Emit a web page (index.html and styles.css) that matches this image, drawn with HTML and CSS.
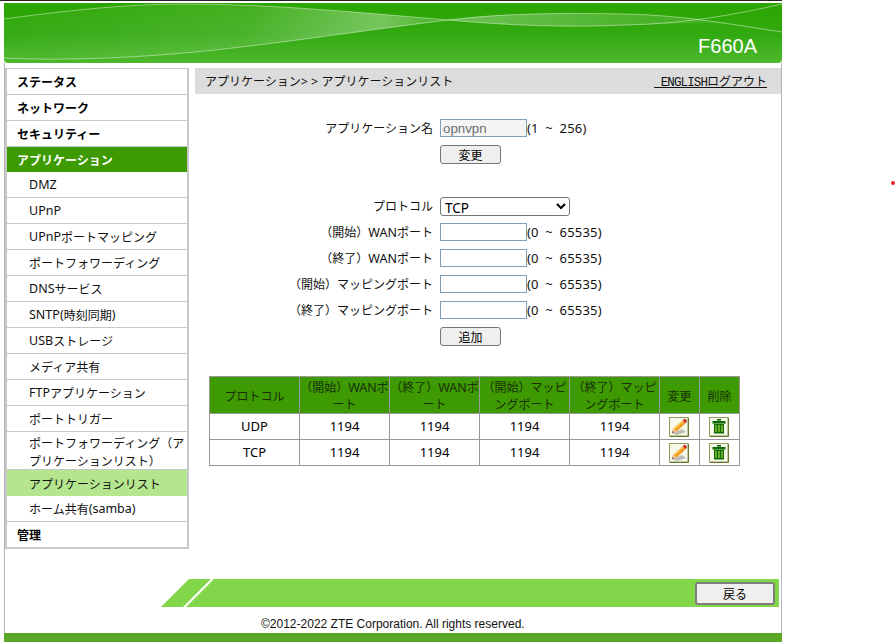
FILE: index.html
```html
<!DOCTYPE html>
<html lang="ja">
<head>
<meta charset="utf-8">
<title>F660A</title>
<link rel="stylesheet" href="styles.css">
</head>
<body>
<div class="topline"></div>
<div class="page">
  <header class="banner">
    <svg class="swoosh" viewBox="0 0 778 60" preserveAspectRatio="none">
      <defs>
        <linearGradient id="bg" x1="0" y1="0" x2="0" y2="1">
          <stop offset="0" stop-color="#2aa500"/>
          <stop offset="0.55" stop-color="#33aa12"/>
          <stop offset="1" stop-color="#4fb82e"/>
        </linearGradient>
        <linearGradient id="lens1" x1="0" y1="0" x2="1" y2="0">
          <stop offset="0" stop-color="#fff" stop-opacity="0.02"/>
          <stop offset="0.55" stop-color="#fff" stop-opacity="0.12"/>
          <stop offset="0.85" stop-color="#fff" stop-opacity="0.34"/>
          <stop offset="1" stop-color="#fff" stop-opacity="0.1"/>
        </linearGradient>
        <linearGradient id="lens2" x1="0" y1="0" x2="1" y2="0">
          <stop offset="0" stop-color="#fff" stop-opacity="0.3"/>
          <stop offset="0.5" stop-color="#fff" stop-opacity="0.16"/>
          <stop offset="1" stop-color="#fff" stop-opacity="0.02"/>
        </linearGradient>
      </defs>
      <rect width="778" height="60" fill="url(#bg)"/>
      <path d="M0 16C60 8 120 1 180 1C270 1 360 10 444 17C370 26 300 37 220 46C140 55 60 58 0 55Z" fill="url(#lens1)"/>
      <path d="M444 17C500 10 560 10 620 11C680 12 730 22 778 29C730 16 680 21 620 22C560 25 500 22 444 17Z" fill="url(#lens2)"/>
      <path d="M0 16C60 8 120 1 180 1C270 1 360 10 444 17" class="thin"/>
      <path d="M0 55C60 58 140 55 220 46C300 37 370 26 444 17C500 10 560 10 620 11C680 12 730 22 778 29" class="thin"/>
      <path d="M444 17C500 22 560 25 620 22C680 21 730 12 778 1" class="thin"/>
    </svg>
    <span class="model">F660A</span>
  </header>

  <div class="main">
    <nav class="menu">
      <a class="top">ステータス</a>
      <a class="top">ネットワーク</a>
      <a class="top">セキュリティー</a>
      <a class="top active">アプリケーション</a>
      <a class="sub"><span class="l">DMZ</span></a>
      <a class="sub"><span class="l">UPnP</span></a>
      <a class="sub"><span class="l">UPnP</span>ポートマッピング</a>
      <a class="sub">ポートフォワーディング</a>
      <a class="sub"><span class="l">DNS</span>サービス</a>
      <a class="sub"><span class="l">SNTP(</span>時刻同期<span class="l">)</span></a>
      <a class="sub"><span class="l">USB</span>ストレージ</a>
      <a class="sub">メディア共有</a>
      <a class="sub"><span class="l">FTP</span>アプリケーション</a>
      <a class="sub">ポートトリガー</a>
      <a class="sub two">ポートフォワーディング（アプリケーションリスト）</a>
      <a class="sub current">アプリケーションリスト</a>
      <a class="sub">ホーム共有<span class="l">(samba)</span></a>
      <a class="top">管理</a>
    </nav>

    <main class="content">
      <div class="crumb">
        <span>アプリケーション<span class="gt">&gt;&gt;</span>アプリケーションリスト</span>
        <span class="links"><span class="mono">&nbsp;ENGLISH</span>ログアウト</span>
      </div>

      <div class="form">
        <label>アプリケーション名</label>
        <input class="field locked" type="text" value="opnvpn" disabled>
        <span class="hint">(1 ~ 256)</span>

        <span></span>
        <button class="btn" type="button">変更</button>
        <span></span>

        <span class="blank"></span>

        <label>プロトコル</label>
        <select class="proto"><option>TCP</option><option>UDP</option></select>
        <span></span>

        <label>（開始）<span class="l">WAN</span>ポート</label>
        <input class="field" type="text">
        <span class="hint">(0 ~ 65535)</span>

        <label>（終了）<span class="l">WAN</span>ポート</label>
        <input class="field" type="text">
        <span class="hint">(0 ~ 65535)</span>

        <label>（開始）マッピングポート</label>
        <input class="field" type="text">
        <span class="hint">(0 ~ 65535)</span>

        <label>（終了）マッピングポート</label>
        <input class="field" type="text">
        <span class="hint">(0 ~ 65535)</span>

        <span></span>
        <button class="btn" type="button">追加</button>
        <span></span>
      </div>

      <table class="list">
        <thead>
          <tr>
            <th class="w90">プロトコル</th>
            <th class="w90">（開始）<span class="l">WAN</span>ポ<br>ート</th>
            <th class="w90">（終了）<span class="l">WAN</span>ポ<br>ート</th>
            <th class="w90">（開始）マッピ<br>ングポート</th>
            <th class="w90">（終了）マッピ<br>ングポート</th>
            <th class="w40">変更</th>
            <th class="w40">削除</th>
          </tr>
        </thead>
        <tbody>
          <tr>
            <td>UDP</td><td>1194</td><td>1194</td><td>1194</td><td>1194</td>
            <td><svg class="ico" viewBox="0 0 20 20"><use href="#pencil"/></svg></td>
            <td><svg class="ico" viewBox="0 0 20 20"><use href="#trash"/></svg></td>
          </tr>
          <tr>
            <td>TCP</td><td>1194</td><td>1194</td><td>1194</td><td>1194</td>
            <td><svg class="ico" viewBox="0 0 20 20"><use href="#pencil"/></svg></td>
            <td><svg class="ico" viewBox="0 0 20 20"><use href="#trash"/></svg></td>
          </tr>
        </tbody>
      </table>
    </main>
  </div>

  <div class="actionbar">
    <svg class="slant" viewBox="0 0 52 28" preserveAspectRatio="none">
      <path d="M0 28L28 0H52V28Z" fill="#82d64a"/>
      <path d="M22 28L50 0H53L25 28Z" fill="#fff"/>
    </svg>
    <div class="barfill"><button class="btn back" type="button">戻る</button></div>
  </div>

  <footer class="copy">©2012-2022 ZTE Corporation. All rights reserved.</footer>
  <div class="band"></div>
</div>
<i class="dot"></i>

<svg class="defs" width="0" height="0">
  <defs>
    <g id="pencil">
      <rect x="0.5" y="0.5" width="18.5" height="18.5" fill="#f6f8ec" stroke="#8f9d58"/>
      <path d="M19.5 1V19.5H1" fill="none" stroke="#66762e"/>
      <path d="M3 16.5L13 12L17 15L8 18Z" fill="#bdbdb6"/>
      <path d="M3 16L4.4 11.4L13.6 3.4L16.6 6.2L7.6 14.6Z" fill="#f09a1e"/>
      <path d="M4.4 11.4L13.6 3.4L14.8 4.6L5.6 12.8Z" fill="#fbc95a"/>
      <path d="M3 16L4.4 11.4L7.6 14.6Z" fill="#eec69a"/>
      <path d="M3 16L3.6 14L5.2 15.3Z" fill="#7a3a3a"/>
      <path d="M13.6 3.4L15.2 1.9C16.2 1.4 18 3 17.8 4.4L16.6 6.2Z" fill="#c8302e"/>
    </g>
    <g id="trash">
      <rect x="0.5" y="0.5" width="18.5" height="18.5" fill="#f6f8ec" stroke="#8f9d58"/>
      <path d="M19.5 1V19.5H1" fill="none" stroke="#66762e"/>
      <rect x="8" y="2" width="4" height="1.6" fill="#0b5a00"/>
      <rect x="3.5" y="4" width="13" height="2.6" fill="#0b6a00"/>
      <path d="M5 7H15V16.5H5Z" fill="#0b6a00"/>
      <path d="M7 8V15M10 8V15M13 8V15" stroke="#b8e04a" stroke-width="1.1"/>
    </g>
  </defs>
</svg>
</body>
</html>
```
FILE: styles.css
```css
* { box-sizing: border-box; }
html { overflow: hidden; }
html, body { margin: 0; padding: 0; height: 100%; background: #fff; }
body {
  font-family: "Noto Sans CJK JP", sans-serif;
  font-size: 12px;
  color: #111;
  width: 896px;
  position: relative;
}
.topline { width: 782px; height: 1px; background: #222; }
.l { font-family: "Noto Sans", "Noto Sans CJK JP", sans-serif; font-size: 12.5px; }
.hint {
  font-family: "Noto Sans", sans-serif;
  font-size: 13px;
  word-spacing: 3px;
  letter-spacing: 0.2px;
  margin-left: -49px;
  white-space: nowrap;
}
.gt { font-family: "Noto Sans", sans-serif; font-size: 12.5px; letter-spacing: 3.2px; }
.mono { font-family: "Liberation Mono", monospace; font-size: 12.5px; letter-spacing: -0.9px; }

.page {
  margin: 2px 0 0 4px;
  width: 778px;
  height: 639px;
  display: flex;
  flex-direction: column;
}
.banner {
  height: 60px;
  flex: none;
  position: relative;
  display: flex;
  justify-content: flex-end;
  align-items: flex-end;
  padding: 0 25px 5px 0;
  border-radius: 0 0 4px 4px;
  overflow: hidden;
}
.swoosh { position: absolute; inset: 0; width: 100%; height: 100%; }
.thin { fill: none; stroke: #fff; stroke-opacity: 0.55; stroke-width: 0.8; }
.model {
  position: relative;
  font-family: "Liberation Sans", sans-serif;
  font-size: 20px;
  line-height: 24px;
  color: #fff;
}

.main {
  flex: none;
  height: 516px;
  padding-top: 5px;
  display: flex;
  align-items: flex-start;
  border-left: 1px solid #b4b4b4;
  border-right: 1px solid #b4b4b4;
}
.menu {
  width: 184px;
  flex: none;
  border: 2px solid #c8c8c8;
  border-top-width: 1px;
  display: flex;
  flex-direction: column;
  background: #fff;
}
.menu a {
  display: flex;
  align-items: center;
  height: 26px;
  border-bottom: 1px solid #c8c8c8;
  flex-wrap: wrap;
  align-content: center;
}
.menu a:last-child { border-bottom: 0; height: 25px; }
.top { padding-left: 10px; font-weight: 700; color: #000; }
.menu .active { background: #3d9a00; color: #fff; border-bottom: 0; height: 25px; }
.sub { padding-left: 22px; color: #111; }
.menu .two { height: 38px; display: block; line-height: 18px; padding-top: 1.5px; }
.menu .current { background: #b5e68f; border-bottom: 0; height: 26px; }

.content {
  width: 586px;
  margin-left: 6px;
  flex: none;
}
.crumb {
  height: 26px;
  background: #dcdcdc;
  display: flex;
  align-items: center;
  justify-content: space-between;
  padding: 0 14px 0 10px;
  color: #111;
}
.links { text-decoration: underline; color: #111; }

.form {
  display: grid;
  grid-template-columns: 239px 130px 1fr;
  grid-auto-rows: 26px;
  column-gap: 6px;
  align-items: center;
  padding-top: 21px;
}
.form label { text-align: right; color: #111; padding: 0 1px 1px 0; }
.blank { grid-column: 1 / -1; }
.field {
  width: 87px;
  height: 18px;
  padding: 0 2px;
  border: 1px solid #7f9db9;
  border-radius: 0;
  background: #fff;
  font-family: "Liberation Sans", sans-serif;
  font-size: 13.3px;
}
.locked { background: #f5f5f5; color: #6d6d6d; }
.proto {
  width: 130px;
  height: 19px;
  margin-top: 1px;
  padding: 0;
  border: 1px solid #767676;
  border-radius: 3px;
  background: #fff;
  font-family: "Noto Sans", sans-serif;
  font-size: 13.5px;
  color: #000;
}
.btn {
  width: 61px;
  height: 19px;
  padding: 0;
  background: #efefef;
  border: 1px solid #767676;
  border-radius: 3px;
  font-family: "Noto Sans CJK JP", sans-serif;
  font-size: 12px;
  line-height: 17px;
  color: #000;
}

.list {
  margin: 27px 0 0 14px;
  width: 530px;
  border-collapse: collapse;
  table-layout: fixed;
  text-align: center;
}
.list th, .list td { border: 1px solid #999; padding: 0; }
.list th {
  height: 37px;
  background: #3d9a00;
  font-weight: 400;
  color: #1a2f0a;
  line-height: 17px;
  white-space: nowrap;
  overflow: hidden;
}
.list th .l { line-height: 1; }
.list td {
  height: 26px;
  padding-bottom: 1px;
  font-family: "Noto Sans", sans-serif;
  font-size: 13px;
  color: #000;
}
.w90 { width: 90px; }
.w40 { width: 40px; }
.ico { display: block; width: 20px; height: 20px; margin: 1px 0 0 9px; }

.actionbar {
  flex: none;
  height: 28px;
  display: flex;
  padding: 0 2px 0 156px;
  border-left: 1px solid #b4b4b4;
  border-right: 1px solid #b4b4b4;
}
.slant { width: 52px; height: 28px; flex: none; }
.barfill {
  flex: 1;
  background: #82d64a;
  display: flex;
  justify-content: flex-end;
  align-items: center;
  padding-right: 4px;
}
.btn.back { width: 80px; height: 23px; border-width: 2px; border-color: #7e7e7e; }

.copy {
  flex: none;
  height: 26px;
  padding: 9px 0 0 256px;
  font-family: "Liberation Sans", sans-serif;
  font-size: 12px;
  line-height: 16px;
  color: #111;
  border-left: 1px solid #b4b4b4;
  border-right: 1px solid #b4b4b4;
}
.band { flex: none; height: 9px; background: #5aa826; }
.dot {
  position: absolute;
  display: block;
  left: 891px;
  top: 181px;
  width: 4px;
  height: 4px;
  border-radius: 50%;
  background: #e8212b;
}
.defs { position: absolute; }
```
